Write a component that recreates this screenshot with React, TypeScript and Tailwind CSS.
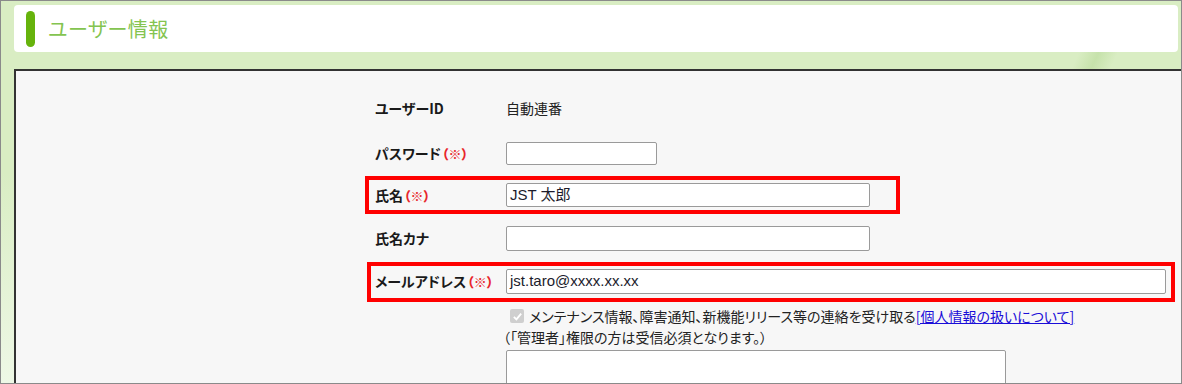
import React from "react";

const jp = "font-['Noto_Sans_CJK_JP','Noto_Sans',sans-serif] [font-feature-settings:'palt']";

function Label({ text, required }: { text: string; required?: boolean }) {
  return (
    <div className="w-[131px] shrink-0 text-[14px] font-bold text-[#1a1a1a]">
      {text}
      {required && <span className="text-[#e8262b] text-[13px] font-black ml-[1px]">（※）</span>}
    </div>
  );
}

function TextInput({ width, value }: { width: string; value?: string }) {
  return (
    <div
      className={`${width} h-full bg-white border border-[#9a9a9a] rounded-[2px] flex items-center px-[3px] text-[15px] text-[#1c1c2c] font-['Liberation_Sans','Noto_Sans_CJK_JP',sans-serif]`}
    >
      {value}
    </div>
  );
}

export default function App() {
  return (
    <div
      className={`w-[1182px] h-[384px] overflow-hidden border border-[#8a8a8a] bg-[linear-gradient(to_bottom,#d9edc3_0%,#d9edc3_45%,#eef8e6_100%)] ${jp}`}
    >
      {/* header */}
      <div className="ml-[13px] mr-[3px] mt-[4px] h-[47px] bg-white rounded-[4px] flex items-center">
        <div className="ml-[12px] w-[9px] h-[36px] rounded-full bg-[#66b30c]" />
        <div className="ml-[13px] text-[20px] text-[#84c450] tracking-[0.5px]">ユーザー情報</div>
      </div>

      {/* content */}
      <div className="relative ml-[13px] mt-[17px] h-[330px] bg-[#f7f7f7] border-t-2 border-l-2 border-[#333]">
        <div className="pointer-events-none absolute -top-[19px] right-[55px] w-[70px] h-[17px] bg-[linear-gradient(115deg,transparent_30%,#c6e2ab_55%,transparent_80%)]" />
        <div className="pl-[359px] pt-[25px] flex flex-col">
          <div className="h-[24px] flex items-center">
            <Label text="ユーザーID" />
            <div className="text-[14px] text-[#222]">自動連番</div>
          </div>

          <div className="mt-[22px] h-[23px] flex items-center">
            <Label text="パスワード" required />
            <TextInput width="w-[151px]" />
          </div>

          <div className="mt-[11px] -ml-[10px] w-[535px] h-[38px] border-4 border-[#ff0000] pl-[6px] py-[3px] flex items-center">
            <Label text="氏名" required />
            <TextInput width="w-[364px]" value="JST 太郎" />
          </div>

          <div className="mt-[12px] h-[25px] flex items-center">
            <Label text="氏名カナ" />
            <TextInput width="w-[364px]" />
          </div>

          <div className="mt-[11px] -ml-[8px] w-[808px] h-[40px] border-4 border-[#ff0000] pl-[4px] pt-[3px] pb-[4px] flex items-center">
            <Label text="メールアドレス" required />
            <TextInput width="w-[660px]" value="jst.taro@xxxx.xx.xx" />
          </div>

          <div className="mt-[5px] ml-[131px] h-[18px] flex items-center text-[14px] text-[#222]">
            <span className="ml-[4px] w-[14px] h-[14px] rounded-[2px] bg-[#cfcfcf] flex items-center justify-center">
              <svg width="11" height="11" viewBox="0 0 12 12">
                <path d="M2 6.5 L4.8 9.2 L10 2.8" fill="none" stroke="#fff" strokeWidth="2" />
              </svg>
            </span>
            <span className="ml-[5px]">メンテナンス情報、障害通知、新機能リリース等の連絡を受け取る</span>
            <a className="text-[#1a0dd8] underline">[個人情報の扱いについて]</a>
          </div>

          <div className="mt-[3px] ml-[128px] h-[18px] flex items-center text-[14px] text-[#222]">
            （「管理者」権限の方は受信必須となります。）
          </div>

          <div className="mt-[4px] ml-[131px] w-[500px] h-[60px] bg-white border border-[#9a9a9a] rounded-[2px]" />
        </div>
      </div>
    </div>
  );
}
